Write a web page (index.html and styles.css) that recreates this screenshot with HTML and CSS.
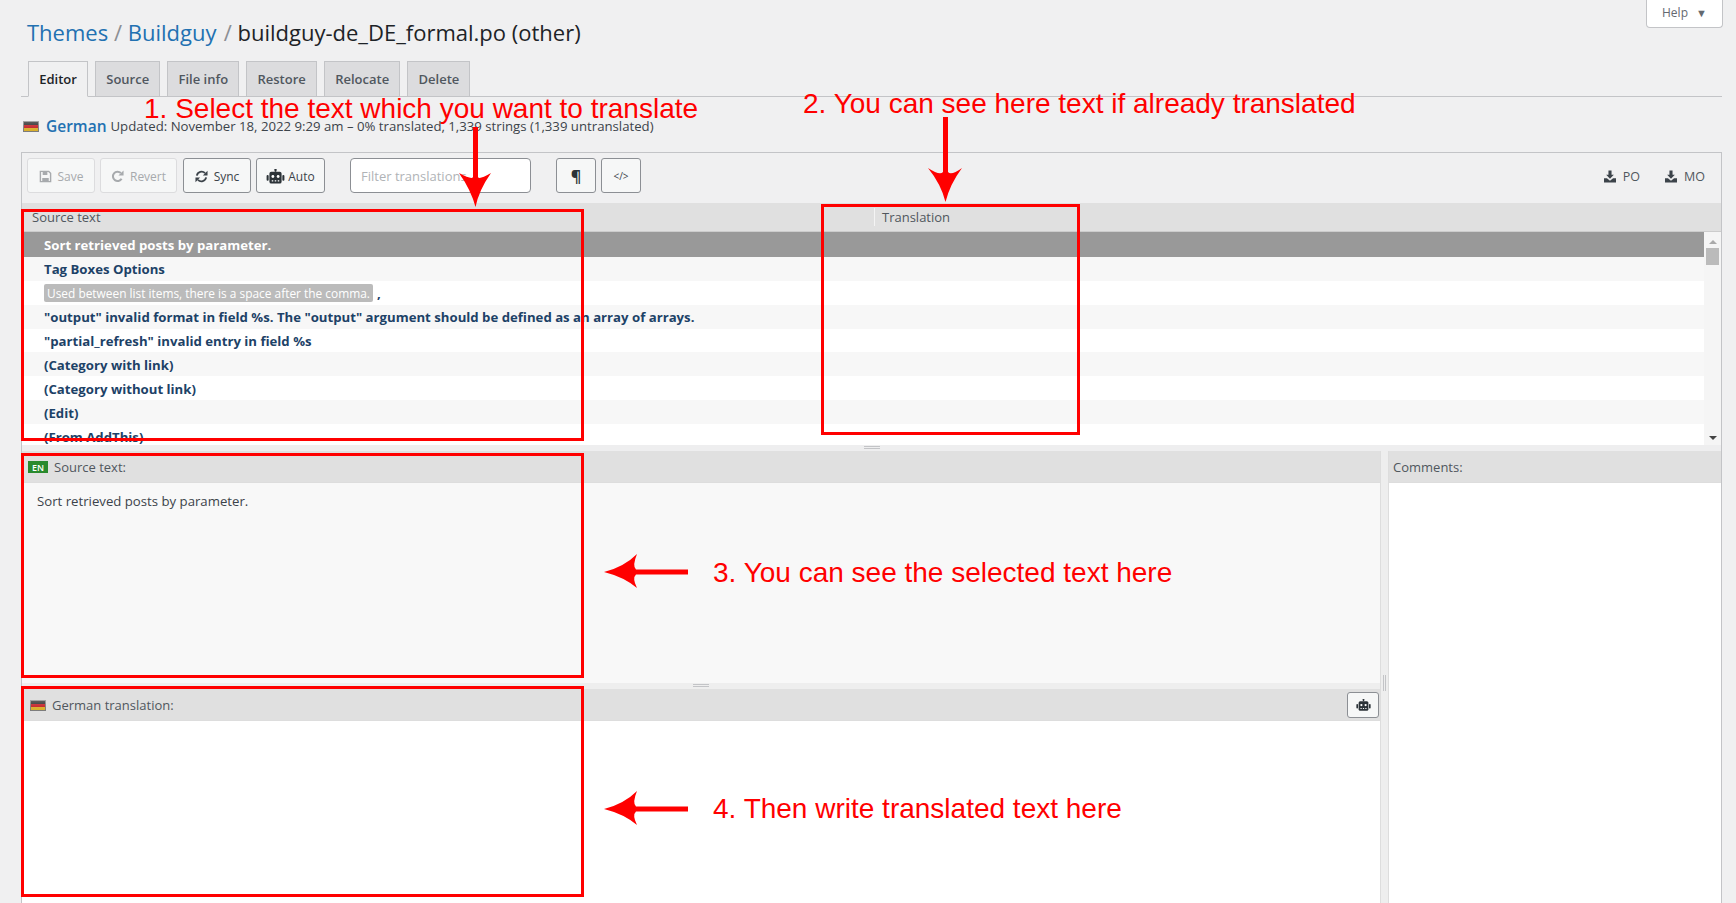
FILE: index.html
```html
<!DOCTYPE html>
<html lang="en">
<head>
<meta charset="utf-8">
<title>Buildguy translation editor</title>
<link rel="stylesheet" href="styles.css">
</head>
<body>
<svg class="defs" width="0" height="0" aria-hidden="true">
  <defs>
    <symbol id="robot" viewBox="0 0 20 16">
      <rect x="9.2" y="0" width="1.6" height="3"/>
      <circle cx="10" cy="1" r="1.2"/>
      <rect x="3.5" y="3" width="13" height="12.5" rx="2"/>
      <rect x="0.5" y="6.5" width="2.2" height="6" rx="1"/>
      <rect x="17.3" y="6.5" width="2.2" height="6" rx="1"/>
      <circle cx="7.2" cy="8" r="1.5" fill="#fff"/>
      <circle cx="12.8" cy="8" r="1.5" fill="#fff"/>
      <rect x="6" y="12" width="1.6" height="1.3" fill="#fff"/>
      <rect x="9.2" y="12" width="1.6" height="1.3" fill="#fff"/>
      <rect x="12.4" y="12" width="1.6" height="1.3" fill="#fff"/>
    </symbol>
    <symbol id="download" viewBox="0 0 14 14">
      <path d="M5.2 0h3.6v5h2.7L7 9.6 2.5 5h2.7z"/>
      <path d="M0 9h3.4L7 12l3.6-3H14v5H0z"/>
    </symbol>
    <linearGradient id="gloss" x1="0" y1="0" x2="0" y2="1">
      <stop offset="0" stop-color="#fff" stop-opacity=".25"/>
      <stop offset="1" stop-color="#000" stop-opacity=".1"/>
    </linearGradient>
    <symbol id="flag" viewBox="0 0 16 11">
      <rect width="16" height="11" fill="#8a8a8a"/>
      <rect x="1" y="1" width="14" height="3" fill="#333"/>
      <rect x="1" y="4" width="14" height="3" fill="#d8232a"/>
      <rect x="1" y="7" width="14" height="3" fill="#f2c22e"/>
      <rect width="16" height="11" fill="url(#gloss)"/>
    </symbol>
  </defs>
</svg>

<div class="page">
  <header class="top">
    <h1 class="crumbs"><a class="crumb">Themes</a> <span class="sep">/</span> <a class="crumb">Buildguy</a> <span class="sep sep-last">/</span> buildguy-de_DE_formal.po (other)</h1>
    <button class="help">Help <span class="help-caret">▼</span></button>
  </header>

  <nav class="tabs">
    <a class="tab tab-active">Editor</a>
    <a class="tab">Source</a>
    <a class="tab">File info</a>
    <a class="tab">Restore</a>
    <a class="tab">Relocate</a>
    <a class="tab">Delete</a>
  </nav>

  <div class="lang">
    <svg class="flag"><use href="#flag"/></svg>
    <a class="lang-name">German</a>
    <span class="lang-meta">Updated: November 18, 2022 9:29 am – 0% translated, 1,339 strings (1,339 untranslated)</span>
  </div>

  <section class="editor">
    <div class="toolbar">
      <button class="btn btn-off btn-save">
        <svg class="ico" viewBox="0 0 14 14"><path fill="none" stroke="currentColor" stroke-width="1.5" d="M1.5 1.5h9l2 2v9h-11z"/><path fill="currentColor" d="M4 1.5h5v4H4zM3.5 8.5h7v4h-7z"/></svg>
        Save
      </button>
      <button class="btn btn-off btn-revert">
        <svg class="ico" viewBox="0 0 14 14"><path fill="none" stroke="currentColor" stroke-width="2.2" d="M11.4 9.4A5 5 0 1 1 10.6 3.3"/><path fill="currentColor" d="M13.5 0.5v5.5H8z"/></svg>
        Revert
      </button>
      <button class="btn btn-sync">
        <svg class="ico" viewBox="0 0 14 14"><path fill="none" stroke="currentColor" stroke-width="2" d="M2 6a5.2 5.2 0 0 1 8.8-2.6M12 8a5.2 5.2 0 0 1-8.800 2.600"/><path fill="currentColor" d="M13.500 0.800v5H8.500zM0.500 13.200v-5h5z"/></svg>
        Sync
      </button>
      <button class="btn btn-auto">
        <svg class="ico-robot"><use href="#robot"/></svg>
        Auto
      </button>
      <input class="filter" type="text" placeholder="Filter translations">
      <button class="btn btn-square btn-para">¶</button>
      <button class="btn btn-square btn-code">&lt;/&gt;</button>
      <div class="downloads">
        <a class="dl"><svg class="ico-dl"><use href="#download"/></svg>PO</a>
        <a class="dl"><svg class="ico-dl"><use href="#download"/></svg>MO</a>
      </div>
    </div>

    <div class="columns">
      <div class="col-source">Source text</div>
      <div class="col-trans">Translation</div>
    </div>

    <div class="list-wrap">
      <div class="list">
        <div class="row row-selected">Sort retrieved posts by parameter.</div>
        <div class="row row-alt">Tag Boxes Options</div>
        <div class="row"><span class="pill">Used between list items, there is a space after the comma.</span> ,</div>
        <div class="row row-alt">"output" invalid format in field %s. The "output" argument should be defined as an array of arrays.</div>
        <div class="row">"partial_refresh" invalid entry in field %s</div>
        <div class="row row-alt">(Category with link)</div>
        <div class="row">(Category without link)</div>
        <div class="row row-alt">(Edit)</div>
        <div class="row">(From AddThis)</div>
      </div>
      <div class="scrollbar">
        <span class="sb-up"></span>
        <span class="sb-thumb"></span>
        <span class="sb-down"></span>
      </div>
    </div>

    <div class="split-h"><span class="grip-h"></span></div>

    <div class="panes">
      <div class="pane-main">
        <div class="pane-head">
          <span class="badge">EN</span>
          <span>Source text:</span>
        </div>
        <div class="source-body">Sort retrieved posts by parameter.</div>
        <div class="split-h split-inner"><span class="grip-h"></span></div>
        <div class="pane-head pane-head-trans">
          <svg class="flag"><use href="#flag"/></svg>
          <span>German translation:</span>
          <button class="btn-robot"><svg class="ico-robot"><use href="#robot"/></svg></button>
        </div>
        <div class="trans-body"></div>
      </div>
      <div class="split-v"><span class="grip-v"></span></div>
      <div class="pane-side">
        <div class="pane-head pane-head-side">Comments:</div>
        <div class="side-body"></div>
      </div>
    </div>
  </section>
</div>

<div class="note note-1">1. Select the text which you want to translate</div>
<div class="note note-2">2. You can see here text if already translated</div>
<div class="note note-3">3. You can see the selected text here</div>
<div class="note note-4">4. Then write translated text here</div>

<span class="redbox box-1"></span>
<span class="redbox box-2"></span>
<span class="redbox box-3"></span>
<span class="redbox box-4"></span>

<svg class="arrows" viewBox="0 0 1736 903" width="1736" height="903" aria-hidden="true">
  <path d="M473 127h5v50h-5z"/>
  <path d="M459 173Q472 180 473 177h5Q479 180 491 173Q479 190 475.500 207Q471 190 459 173z"/>
  <path d="M943 117h5v55h-5z"/>
  <path d="M928 168Q940 176 943 172h5Q951 176 962 168Q950 184 945.500 202Q941 184 928 168z"/>
  <path d="M636 569.500h52v5h-52z"/>
  <path d="M604 572Q624 567 637 554Q632 566 636 569.500v5Q632 578 637 588Q624 577 604 572z"/>
  <path d="M636 806.500h52v5h-52z"/>
  <path d="M604 809Q624 804 637 791Q632 803 636 806.500v5Q632 815 637 825Q624 814 604 809z"/>
</svg>
</body>
</html>
```

FILE: styles.css
```css
* { box-sizing: border-box; }

html, body {
  margin: 0;
  height: 903px;
  overflow: hidden;
}

body {
  position: relative;
  background: #f0f0f1;
  color: #3c434a;
  font-family: "Open Sans", "Noto Sans", sans-serif;
  font-size: 13px;
}

.defs { position: absolute; }

.page {
  height: 903px;
  padding: 0 14px 0 21px;
  display: flex;
  flex-direction: column;
}

/* heading */
.top {
  height: 61px;
  flex: none;
  display: flex;
  justify-content: space-between;
  align-items: flex-start;
}

.crumbs {
  margin: 17px 0 0 6px;
  font-size: 22px;
  line-height: 30px;
  font-weight: 400;
  color: #1d2327;
}

.crumb { color: #2271b1; }
.sep { color: #8c8f94; }
.sep-last { margin-left: 1.500px; }

.help {
  width: 77px;
  height: 28px;
  margin-right: -1px;
  padding: 0 0 2px;
  background: #fff;
  border: 1px solid #c3c4c7;
  border-top: 0;
  border-radius: 0 0 4px 4px;
  color: #646970;
  font: 12px "Open Sans", sans-serif;
}

.help-caret { font-size: 11px; margin-left: 5px; }

/* tabs */
.tabs {
  height: 36px;
  flex: none;
  display: flex;
  gap: 7px;
  padding-left: 7px;
  border-bottom: 1px solid #c3c4c7;
}

.tab {
  height: 36px;
  padding: 0 10.200px;
  display: flex;
  align-items: center;
  background: #dcdcde;
  border: 1px solid #c3c4c7;
  color: #50575e;
  font-size: 13px;
  font-weight: 600;
  white-space: nowrap;
}

.tab-active {
  background: #f0f0f1;
  border-bottom-color: #f0f0f1;
  color: #1d2327;
}

/* language row */
.lang {
  height: 55px;
  flex: none;
  display: flex;
  align-items: center;
  padding: 3px 0 0 2px;
}

.flag { width: 16px; height: 11px; flex: none; }

.lang-name {
  margin-left: 7px;
  color: #2271b1;
  font-size: 15.500px;
  font-weight: 600;
}

.lang-meta { margin-left: 4px; font-size: 13.200px; color: #3c434a; }

/* editor */
.editor {
  flex: 1;
  min-height: 0;
  display: flex;
  flex-direction: column;
  border: 1px solid #c3c4c7;
  border-width: 1px 1px 0;
}

.toolbar {
  height: 50px;
  flex: none;
  display: flex;
  align-items: flex-start;
  padding: 5px 16px 0 5px;
}

.btn {
  height: 35px;
  display: flex;
  align-items: center;
  justify-content: center;
  gap: 6px;
  padding: 1px 0 0;
  background: #f6f7f7;
  border: 1px solid #8c8f94;
  border-radius: 3px;
  color: #3c434a;
  font: 12px "Open Sans", sans-serif;
}

.btn-off { border-color: #dcdcde; color: #a7aaad; }
.btn-save { width: 68px; }
.btn-revert { width: 77px; margin-left: 5px; }
.btn-sync { width: 68px; margin-left: 6px; }
.btn-auto { width: 69px; margin-left: 5px; gap: 3px; }
.btn-square { width: 40px; }
.btn-para { margin-left: 25px; font-size: 16px; font-weight: 700; color: #2c3338; }
.btn-code { margin-left: 5px; font-size: 10px; }

.ico { width: 13px; height: 13px; flex: none; }
.ico-robot { width: 19px; height: 15px; flex: none; fill: #2c3338; }
.ico-dl { width: 12px; height: 13px; margin-right: 7px; fill: #3c434a; }

.filter {
  width: 181px;
  height: 35px;
  margin-left: 25px;
  padding: 0 10px;
  background: #fff;
  border: 1px solid #8c8f94;
  border-radius: 4px;
  font: 13px "Open Sans", sans-serif;
}

.filter::placeholder { color: #b0b3b6; }

.downloads {
  margin-left: auto;
  margin-top: 10px;
  display: flex;
  gap: 25px;
}

.dl {
  display: flex;
  align-items: center;
  font-size: 12.500px;
  color: #50575e;
}

/* columns */
.columns {
  height: 29px;
  flex: none;
  display: flex;
  align-items: center;
  background: #e0e0e0;
  border-bottom: 1px solid #ccc;
}

.col-source { width: 852px; padding-left: 10px; color: #50575e; }

.col-trans {
  padding-left: 7px;
  border-left: 1px solid #f4f4f4;
  color: #50575e;
}

/* list */
.list-wrap {
  height: 213px;
  flex: none;
  display: flex;
  overflow: hidden;
}

.list { flex: 1; min-width: 0; background: #fff; }

.row {
  height: 23.900px;
  padding: 1px 0 0 22px;
  display: flex;
  align-items: center;
  gap: 4px;
  overflow: hidden;
  background: #fff;
  color: #1d4267;
  font-size: 13.200px;
  font-weight: 700;
  white-space: nowrap;
}

.row-alt { background: #f7f7f7; }

.row-selected {
  height: 24.900px;
  background: #999;
  color: #fff;
}

.pill {
  height: 18px;
  padding: 0 3px;
  display: flex;
  align-items: center;
  background: #bbb;
  border-radius: 2px;
  color: #fff;
  font-weight: 400;
  font-size: 11.900px;
}

.scrollbar {
  width: 17px;
  flex: none;
  padding: 8px 0 0 2px;
  display: flex;
  flex-direction: column;
  background: #f5f5f5;
}

.sb-up {
  width: 0;
  margin-left: 3px;
  border: 4px solid transparent;
  border-top: 0;
  border-bottom: 4px solid #aaa;
}

.sb-thumb {
  width: 13px;
  height: 17px;
  margin-top: 4px;
  background: #bbb;
}

.sb-down {
  width: 0;
  margin: 171px 0 0 3px;
  border: 4px solid transparent;
  border-bottom: 0;
  border-top: 4px solid #444;
}

/* splitters */
.split-h {
  height: 6px;
  flex: none;
  display: flex;
  justify-content: center;
  padding-top: 1px;
  background: #eeeeef;
}

.grip-h {
  width: 16px;
  height: 3px;
  border-top: 1px solid #c3c4c7;
  border-bottom: 1px solid #c3c4c7;
}

.split-inner { background: #eee; }

/* panes */
.panes {
  flex: 1;
  min-height: 0;
  display: flex;
  background: #eee;
}

.pane-main {
  width: 1359px;
  flex: none;
  display: flex;
  flex-direction: column;
  border-right: 1px solid #ddd;
}

.split-v {
  width: 7px;
  flex: none;
  display: flex;
  align-items: flex-start;
  justify-content: center;
  padding-top: 224px;
}

.grip-v {
  width: 3px;
  height: 16px;
  border-left: 1px solid #c3c4c7;
  border-right: 1px solid #c3c4c7;
}

.pane-side {
  flex: 1;
  display: flex;
  flex-direction: column;
  border-left: 1px solid #ddd;
}

.pane-head {
  height: 32px;
  flex: none;
  display: flex;
  align-items: center;
  padding: 1px 0 0 6px;
  background: #e0e0e0;
  border-bottom: 1px solid #ddd;
  color: #50575e;
}

.pane-head-trans { padding-left: 8px; gap: 6px; }
.pane-head-side { padding-left: 4px; }

.badge {
  width: 20px;
  height: 12px;
  margin-right: 6px;
  display: flex;
  align-items: center;
  justify-content: center;
  background: #2a8a2e;
  color: #fff;
  font-size: 9px;
  font-weight: 600;
}

.source-body {
  height: 200px;
  flex: none;
  padding: 10px 14px 0 15px;
  background: #f8f8f8;
  color: #3c434a;
  font-size: 13.200px;
  line-height: 17px;
}

.trans-body, .side-body { flex: 1; background: #fff; }

.btn-robot {
  width: 32px;
  height: 26px;
  margin-left: auto;
  margin-right: 1px;
  padding: 0;
  display: flex;
  align-items: center;
  justify-content: center;
  background: #f6f7f7;
  border: 1px solid #8c8f94;
  border-radius: 3px;
}

.btn-robot .ico-robot { width: 15px; height: 12px; }

/* tutorial annotations over the screenshot */
.note {
  position: absolute;
  color: #f00;
  font-family: "Liberation Sans", Arial, sans-serif;
  font-size: 28px;
  line-height: 32px;
  white-space: nowrap;
}

.note-1 { left: 144px; top: 93px; }
.note-2 { left: 803px; top: 88px; }
.note-3 { left: 713px; top: 557px; }
.note-4 { left: 713px; top: 793px; }

.redbox {
  position: absolute;
  left: 21px;
  width: 563px;
  border: 3px solid #f00;
}

.box-1 { top: 209px; height: 232px; }
.box-2 { left: 821px; width: 259px; top: 204px; height: 231px; }
.box-3 { top: 453px; height: 225px; }
.box-4 { top: 686px; height: 211px; }

.arrows {
  position: absolute;
  left: 0;
  top: 0;
  fill: #f00;
  pointer-events: none;
}
```
